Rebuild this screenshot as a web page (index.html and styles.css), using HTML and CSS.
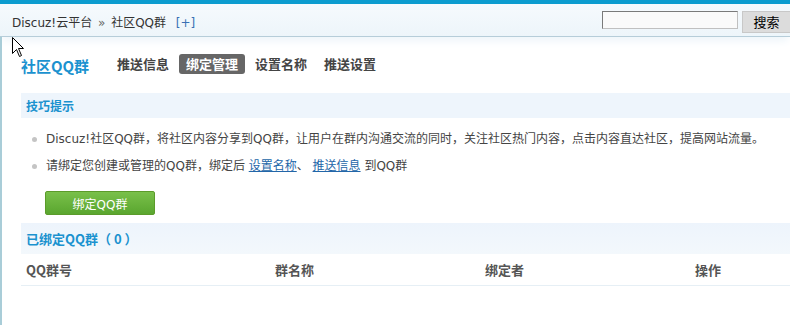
FILE: index.html
```html
<!DOCTYPE html>
<html lang="zh-CN">
<head>
    <meta charset="UTF-8">
    <title>社区QQ群 - Discuz!云平台</title>
    <link rel="stylesheet" href="styles.css">
</head>
<body>
    <header class="topbar">
        <div class="crumbs">
            Discuz!云平台 <span class="sep">»</span> 社区QQ群 <a class="add" href="#">[+]</a>
        </div>
        <form class="search">
            <input type="text" class="search-input">
            <button type="button" class="search-btn">搜索</button>
        </form>
    </header>

    <div class="main">
        <div class="title-row">
            <h1 class="app-title">社区QQ群</h1>
            <ul class="tabs">
                <li><a href="#">推送信息</a></li>
                <li class="active"><a href="#">绑定管理</a></li>
                <li><a href="#">设置名称</a></li>
                <li><a href="#">推送设置</a></li>
            </ul>
        </div>

        <div class="section-head tips-head">技巧提示</div>
        <ul class="tips">
            <li>Discuz!社区QQ群，将社区内容分享到QQ群，让用户在群内沟通交流的同时，关注社区热门内容，点击内容直达社区，提高网站流量。</li>
            <li>请绑定您创建或管理的QQ群，绑定后 <a href="#">设置名称</a>、 <a href="#">推送信息</a> 到QQ群</li>
        </ul>
        <div class="actions">
            <button type="button" class="green-btn">绑定QQ群</button>
        </div>

        <div class="section-head bound-head">已绑定QQ群（ 0 ）</div>
        <table class="groups">
            <thead>
                <tr>
                    <th class="col-id">QQ群号</th>
                    <th class="col-name">群名称</th>
                    <th class="col-owner">绑定者</th>
                    <th>操作</th>
                </tr>
            </thead>
            <tbody></tbody>
        </table>
    </div>

    <!-- mouse pointer captured in the screenshot -->
    <svg class="cursor" width="13" height="21" viewBox="0 0 13 21">
        <path d="M0.5 0.5 L0.5 16.5 L4.5 12.5 L7.5 19.5 L9.5 18.5 L6.5 11.5 L11.5 11.5 Z" fill="#fff" stroke="#000" stroke-width="1"/>
    </svg>
</body>
</html>
```

FILE: styles.css
```css
body {
    margin: 0;
    padding: 0;
    font-family: "DejaVu Sans", "Noto Sans CJK SC", sans-serif;
    font-size: 12px;
    color: #444;
    background-color: #fff;
    position: relative;
    height: 325px;
    overflow: hidden;
}
a {
    color: #2366a8;
}
.topbar {
    height: 32px;
    border-top: 4px solid #0c9ccf;
    border-bottom: 1px solid #b6cdd9;
    background: linear-gradient(#f6fafd, #edf5fa);
    display: flex;
    align-items: center;
    justify-content: space-between;
    padding-left: 12px;
    box-shadow: 0 6px 8px -2px #eef5fa;
}
.crumbs {
    color: #333;
    font-size: 12px;
    padding-top: 2px;
}
.crumbs .sep {
    color: #666;
    margin: 0 2px;
}
.crumbs .add {
    text-decoration: none;
    color: #3a70b4;
    margin-left: 6px;
}
.search {
    display: flex;
    align-items: flex-start;
    gap: 4px;
    margin: 7px 0 0 0;
    height: 22px;
    align-self: flex-start;
}
.search-input {
    width: 132px;
    height: 14px;
    padding: 1px;
    border: 1px solid #7a7a7a;
    border-right-color: #c0c0c0;
    border-bottom-color: #c0c0c0;
    background: #fafafa;
}
.search-btn {
    width: 48px;
    height: 22px;
    border: 1px solid #c8c8c8;
    border-right: none;
    background: #dcdcdc;
    color: #000;
    font-family: "Noto Sans CJK SC", sans-serif;
    font-size: 13px;
    padding: 0;
    line-height: 18px;
}
.main {
    border-left: 2px solid #a9cdd8;
    padding-left: 19px;
    height: 288px;
}
.title-row {
    display: flex;
    align-items: center;
    padding-top: 16px;
    height: 22px;
    margin-bottom: 18px;
}
.app-title {
    margin: 0;
    font-size: 15px;
    color: #1b92cf;
    font-weight: bold;
    font-family: "Noto Sans CJK SC", sans-serif;
    width: 89px;
    padding-top: 2px;
}
.tabs {
    display: flex;
    list-style: none;
    margin: 0;
    padding: 0;
    gap: 3px;
}
.tabs li a {
    display: block;
    padding: 0 7px;
    height: 20px;
    line-height: 20px;
    font-weight: bold;
    font-size: 13px;
    color: #444;
    text-decoration: none;
    font-family: "Noto Sans CJK SC", sans-serif;
    border-radius: 3px;
}
.tabs li.active a {
    background-color: #666;
    color: #fff;
}
.section-head {
    height: 25px;
    line-height: 25px;
    padding-left: 5px;
    font-weight: bold;
    font-size: 12px;
    color: #1b92cf;
    font-family: "Noto Sans CJK SC", sans-serif;
}
.tips-head {
    background-color: #eef5fc;
}
.bound-head {
    height: 31px;
    line-height: 31px;
    background: linear-gradient(#edf4fc, #f3f8fc);
    font-size: 13px;
}
.tips {
    list-style: none;
    margin: 0;
    padding: 0 0 0 11px;
}
.tips li {
    position: relative;
    padding-left: 14px;
    line-height: 27px;
}
.tips li:first-child {
    margin-top: 8px;
}
.tips li::before {
    content: "";
    position: absolute;
    left: 0;
    top: 11px;
    width: 5px;
    height: 5px;
    border-radius: 50%;
    background-color: #c4c4c4;
}
.actions {
    padding: 11px 0 8px 24px;
}
.green-btn {
    width: 110px;
    height: 24px;
    border: 1px solid #5b9b2a;
    border-radius: 2px;
    background: linear-gradient(#79c04a, #5aa62f);
    color: #fff;
    font-size: 12px;
    font-family: "DejaVu Sans", "Noto Sans CJK SC", sans-serif;
    padding: 0;
}
.groups {
    width: 100%;
    border-collapse: collapse;
}
.groups th {
    text-align: left;
    height: 31px;
    padding: 0 5px;
    font-weight: bold;
    font-size: 13px;
    color: #555;
    font-family: "Noto Sans CJK SC", sans-serif;
    border-bottom: 1px solid #e6eff5;
}
.groups .col-id {
    width: 239px;
}
.groups .col-name,
.groups .col-owner {
    width: 200px;
}
.cursor {
    position: absolute;
    left: 12px;
    top: 37px;
}
```
